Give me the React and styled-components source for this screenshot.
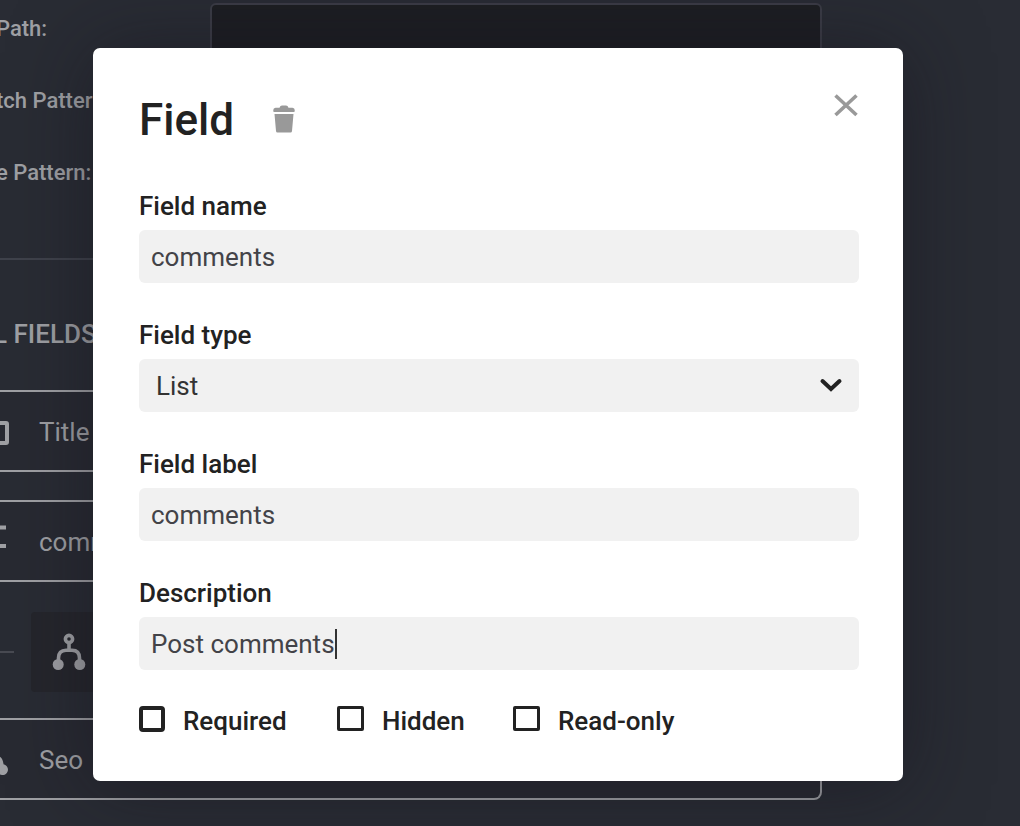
import React from "react";
import styled, { createGlobalStyle } from "styled-components";

const GlobalStyle = createGlobalStyle`
  *, *::before, *::after { box-sizing: border-box; }
  body {
    margin: 0;
    background: #292c34;
    font-family: Roboto, "Liberation Sans", sans-serif;
    font-size: 26px;
    line-height: 32px;
    overflow: hidden;
  }
  button, input, select { font: inherit; }
`;

const Page = styled.div`
  position: relative;
  min-height: 100vh;
  overflow: hidden;
`;

const Settings = styled.main`
  padding: 3px 198px 26px 0;
  color: #9fa0a4;
`;

const SettingRow = styled.div`
  display: grid;
  grid-template-columns: 210px 1fr;
  align-items: center;
  height: 52px;
  margin-bottom: 20px;
`;

const SettingLabel = styled.label`
  margin-left: -4px;
  font-size: 22px;
  font-weight: 500;
`;

const SettingInput = styled.input`
  width: 100%;
  height: 52px;
  border: 2px solid #3b3c46;
  border-radius: 6px;
  background: #1d1e23;
  color: inherit;
`;

const Divider = styled.hr`
  height: 2px;
  margin: 59px 0 58px;
  border: 0;
  background: #3f424b;
`;

const SectionTitle = styled.h2`
  margin: 0 0 40px -7px;
  font-size: 26px;
  font-weight: 500;
`;

const FieldRow = styled.div`
  display: flex;
  align-items: center;
  height: 82px;
  margin-bottom: ${(p) => (p.$nested ? "0" : "28px")};
  padding-top: 2px;
  border: 2px solid #9fa0a4;
  border-left: 0;
  border-radius: 0 8px 8px 0;
  background: #282a32;
`;

const RowIcon = styled.svg`
  flex: none;
  width: 39px;
  height: 40px;
`;

const NestedRow = styled.div`
  display: flex;
  align-items: center;
  gap: 17px;
  padding: 30px 0 26px;
`;

const Connector = styled.span`
  width: 14px;
  height: 2px;
  background: #484a52;
`;

const NestedTile = styled.div`
  display: grid;
  place-items: center;
  width: 76px;
  height: 80px;
  border-radius: 4px;
  background: #25262c;
`;

const Overlay = styled.div`
  position: absolute;
  inset: 0;
  padding: 48px 117px 44px 93px;
`;

const Dialog = styled.section`
  padding: 44px 44px 45px 46px;
  border-radius: 7px;
  background: #fff;
  color: #222;
  box-shadow: 0 4px 80px rgba(20, 18, 28, 0.5);
`;

const DialogHeader = styled.header`
  display: flex;
  align-items: center;
  height: 56px;
  margin-bottom: 42px;
`;

const DialogTitle = styled.h1`
  margin: 0;
  font-size: 44px;
  line-height: 56px;
  font-weight: 500;
`;

const IconButton = styled.button`
  display: grid;
  place-items: center;
  padding: 0;
  border: 0;
  background: none;
  color: #999;
  cursor: pointer;
`;

const DeleteButton = styled(IconButton)`
  margin-left: 39px;
  padding-bottom: 2px;
`;

const CloseButton = styled(IconButton)`
  align-self: flex-start;
  margin-left: auto;
`;

const FormField = styled.div`
  display: flex;
  flex-direction: column;
  gap: 8px;
  margin-bottom: 36px;
`;

const FieldLabel = styled.label`
  font-weight: 500;
`;

const Control = styled.div`
  position: relative;
  display: flex;
  align-items: center;
  height: 53px;
  border-radius: 6px;
  background: #f1f1f1;
  color: #434348;
`;

const TextInput = styled.input`
  flex: ${(p) => (p.$editing ? "none" : "1")};
  field-sizing: ${(p) => (p.$editing ? "content" : "fixed")};
  min-width: 0;
  height: 53px;
  padding: 0 0 0 12px;
  border: 0;
  outline: 0;
  background: none;
  color: inherit;
  caret-color: transparent;
`;

const Caret = styled.span`
  width: 2px;
  height: 30px;
  background: #333;
`;

const Select = styled.select`
  appearance: none;
  width: 100%;
  height: 53px;
  padding: 1px 48px 0 17px;
  border: 0;
  outline: 0;
  background: none;
  color: #333;
`;

const Chevron = styled.svg`
  position: absolute;
  right: 16px;
  pointer-events: none;
`;

const Options = styled.div`
  display: grid;
  grid-template-columns: 198px 176px 1fr;
`;

const Option = styled.label`
  display: flex;
  gap: 18px;
  line-height: 30px;
  font-weight: 500;
`;

const Checkbox = styled.input`
  appearance: none;
  width: ${(p) => (p.$strong ? "26px" : "27px")};
  height: ${(p) => (p.$strong ? "26px" : "25px")};
  margin: 0;
  border: ${(p) => (p.$strong ? "4px" : "3px")} solid #222;
  border-radius: ${(p) => (p.$strong ? "4px" : "2px")};
`;

const SETTINGS = [
  ["path", "Path:"],
  ["match", "tch Pattern:"],
  ["exclude", "e Pattern:"],
];

function TextIcon() {
  return (
    <RowIcon viewBox="0 0 39 40" aria-hidden="true">
      <rect x="-16" y="11" width="23" height="20" rx="1" fill="none" stroke="currentColor" strokeWidth="4" />
    </RowIcon>
  );
}

function ListIcon() {
  return (
    <RowIcon viewBox="0 0 39 40" aria-hidden="true">
      <path d="M0 5.500h6M0 24h6" stroke="currentColor" strokeWidth="4" />
    </RowIcon>
  );
}

function GroupIcon() {
  return (
    <RowIcon viewBox="0 0 39 40" aria-hidden="true">
      <path d="M-4 15C1 16 3 19 3.500 24.200A5.500 5.500 0 1 1-2.500 32L-4 28Z" fill="currentColor" />
    </RowIcon>
  );
}

function BranchIcon() {
  return (
    <svg width="34" height="38" viewBox="0 0 34 38" aria-hidden="true">
      <g fill="none" stroke="currentColor" strokeWidth="3.600">
        <circle cx="17" cy="6" r="3.600" />
        <path d="M17 9.500V17M6.500 30V25C6.500 20 9 17.200 14 17.200H20C25 17.200 27.500 20 27.500 25V30" />
      </g>
      <circle cx="6.200" cy="31.500" r="5.500" fill="currentColor" />
      <circle cx="27.800" cy="31.500" r="5.500" fill="currentColor" />
    </svg>
  );
}

function TextField({ id, label, value, editing }) {
  return (
    <FormField>
      <FieldLabel htmlFor={id}>{label}</FieldLabel>
      <Control>
        <TextInput id={id} type="text" defaultValue={value} $editing={editing} />
        {editing && <Caret />}
      </Control>
    </FormField>
  );
}

export default function App() {
  return (
    <>
      <GlobalStyle />
      <Page>
        <Settings>
          {SETTINGS.map(([id, label]) => (
            <SettingRow key={id}>
              <SettingLabel htmlFor={id}>{label}</SettingLabel>
              <SettingInput id={id} type="text" />
            </SettingRow>
          ))}
          <Divider />
          <SectionTitle>L FIELDS</SectionTitle>
          <FieldRow>
            <TextIcon />
            Title
          </FieldRow>
          <FieldRow $nested>
            <ListIcon />
            comments
          </FieldRow>
          <NestedRow>
            <Connector />
            <NestedTile>
              <BranchIcon />
            </NestedTile>
          </NestedRow>
          <FieldRow $nested>
            <GroupIcon />
            Seo
          </FieldRow>
        </Settings>
        <Overlay>
          <Dialog role="dialog" aria-modal="true" aria-labelledby="dialog-title">
            <DialogHeader>
              <DialogTitle id="dialog-title">Field</DialogTitle>
              <DeleteButton type="button" aria-label="Delete field">
                <svg width="22" height="28" viewBox="0 0 22 28" fill="currentColor" aria-hidden="true">
                  <path d="M2.500 2.800H6.500Q7.200.400 9 .400H13Q14.800.400 15.500 2.800H19.500Q21.700 3 21.700 5V6.200Q21.700 7 20.900 7H1.100Q.300 7 .300 6.200V5Q.300 3 2.500 2.800Z" />
                  <path d="M1.500 9H20.500L19 26Q18.900 27.500 17.500 27.500H4.500Q3.100 27.500 3 26Z" />
                </svg>
              </DeleteButton>
              <CloseButton type="button" aria-label="Close">
                <svg width="26" height="26" viewBox="0 0 26 26" aria-hidden="true">
                  <path d="M2.500 3.500L23.500 23M23.500 3.500L2.500 23" stroke="currentColor" strokeWidth="3.600" />
                </svg>
              </CloseButton>
            </DialogHeader>
            <TextField id="field-name" label="Field name" value="comments" />
            <FormField>
              <FieldLabel htmlFor="field-type">Field type</FieldLabel>
              <Control>
                <Select id="field-type" defaultValue="List">
                  <option>List</option>
                </Select>
                <Chevron width="24" height="16" viewBox="0 0 24 16" aria-hidden="true">
                  <path d="M3.500 3L12 11L20.500 3" fill="none" stroke="#222" strokeWidth="4" strokeLinecap="round" />
                </Chevron>
              </Control>
            </FormField>
            <TextField id="field-label" label="Field label" value="comments" />
            <TextField id="description" label="Description" value="Post comments" editing />
            <Options>
              <Option>
                <Checkbox type="checkbox" $strong />
                Required
              </Option>
              <Option>
                <Checkbox type="checkbox" />
                Hidden
              </Option>
              <Option>
                <Checkbox type="checkbox" />
                Read-only
              </Option>
            </Options>
          </Dialog>
        </Overlay>
      </Page>
    </>
  );
}
